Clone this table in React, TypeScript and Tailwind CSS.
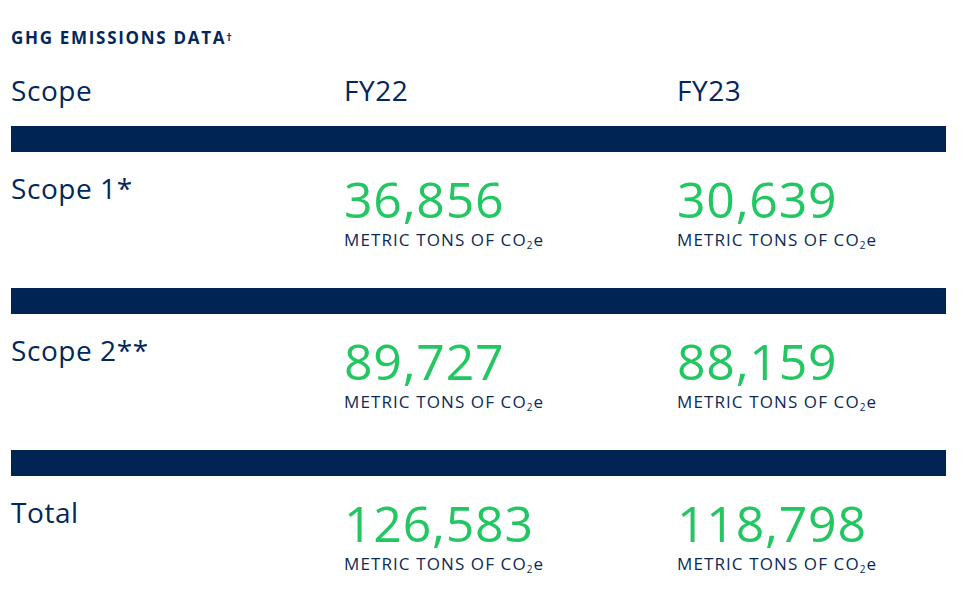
const rows = [
  { label: "Scope 1*", fy22: "36,856", fy23: "30,639" },
  { label: "Scope 2**", fy22: "89,727", fy23: "88,159" },
  { label: "Total", fy22: "126,583", fy23: "118,798" },
];

function Unit() {
  return (
    <div className="text-[17px] font-medium leading-none text-[#0b2a55] tracking-[0.065em]">
      METRIC TONS OF CO<sub className="text-[10px] align-baseline relative top-[3px]">2</sub>e
    </div>
  );
}

export default function App() {
  return (
    <div
      className="w-[976px] h-[592px] bg-white text-[#03275a] px-[11px] pt-[29px] overflow-hidden"
      style={{ fontFamily: '"Open Sans", "Liberation Sans", sans-serif' }}
    >
      <h2 className="text-[17px] font-bold leading-none tracking-[0.1em] h-[16px]">
        GHG EMISSIONS DATA<sup className="text-[11px] relative -top-[3px]">†</sup>
      </h2>
      <div className="grid grid-cols-[333px_333px_1fr] mt-[31px] h-[50px] text-[28px] leading-none tracking-[0.02em]">
        <div>Scope</div>
        <div>FY22</div>
        <div>FY23</div>
      </div>
      {rows.map((r) => (
        <div key={r.label}>
          <div className="h-[26px] bg-[#002554] w-[935px]" />
          <div className="grid grid-cols-[333px_333px_1fr] h-[136px] pt-[22px]">
            <div className="text-[28px] leading-none tracking-[0.02em]">{r.label}</div>
            {[r.fy22, r.fy23].map((v, i) => (
              <div key={i}>
                <div className="text-[50px] font-medium leading-none text-[#22c762] tracking-[0.015em]">{v}</div>
                <div className="mt-[7px]">
                  <Unit />
                </div>
              </div>
            ))}
          </div>
        </div>
      ))}
    </div>
  );
}
